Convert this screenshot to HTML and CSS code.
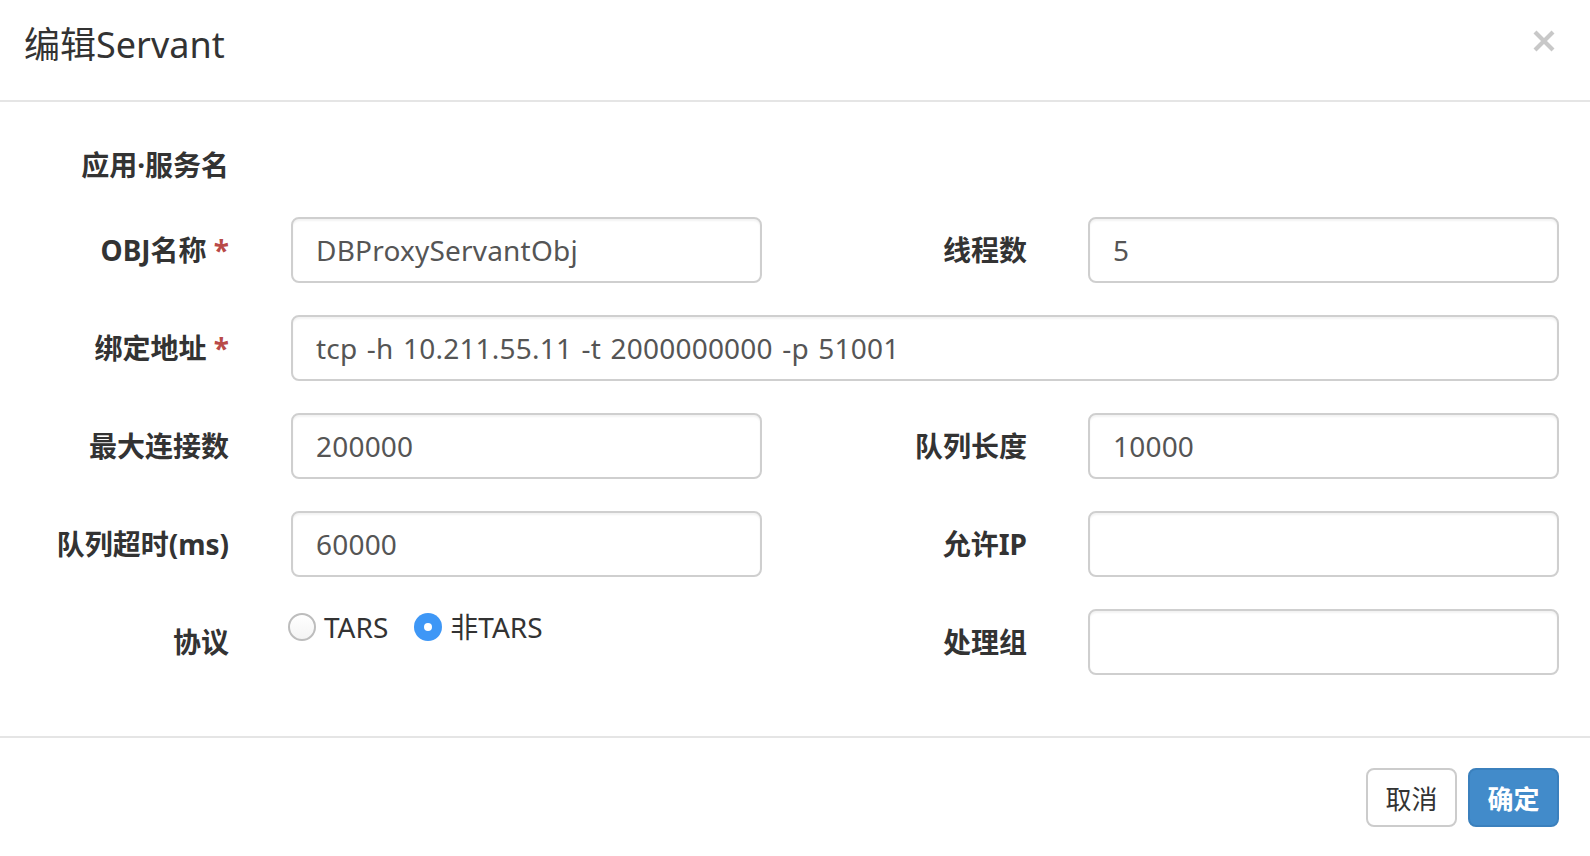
FILE: index.html
```html
<!DOCTYPE html>
<html lang="zh-CN">
<head>
<meta charset="utf-8">
<title>编辑Servant</title>
<link rel="stylesheet" href="styles.css">
</head>
<body>
<div class="modal">
  <div class="modal-header">
    <h4 class="modal-title">编辑Servant</h4>
    <button class="close" type="button" aria-label="关闭">
      <svg width="22" height="22" viewBox="0 0 22 22"><path d="M2 2 L20 20 M20 2 L2 20" stroke="#c8c8c8" stroke-width="4.2" stroke-linecap="butt"/></svg>
    </button>
  </div>
  <div class="modal-body">
    <form class="form-grid">
      <label class="ctl-label static-label">应用·服务名</label>
      <div class="static-value"></div>

      <label class="ctl-label">OBJ名称 <span class="req">*</span></label>
      <input class="form-control" type="text" value="DBProxyServantObj">
      <label class="ctl-label right">线程数</label>
      <input class="form-control" type="text" value="5">

      <label class="ctl-label">绑定地址 <span class="req">*</span></label>
      <input class="form-control wide" type="text" value="tcp -h 10.211.55.11 -t 2000000000 -p 51001">

      <label class="ctl-label">最大连接数</label>
      <input class="form-control" type="text" value="200000">
      <label class="ctl-label right">队列长度</label>
      <input class="form-control" type="text" value="10000">

      <label class="ctl-label">队列超时(ms)</label>
      <input class="form-control" type="text" value="60000">
      <label class="ctl-label right">允许IP</label>
      <input class="form-control" type="text" value="">

      <label class="ctl-label">协议</label>
      <div class="radio-group">
        <span class="radio-item"><span class="radio"></span>TARS</span>
        <span class="radio-item"><span class="radio checked"></span>非TARS</span>
      </div>
      <label class="ctl-label right">处理组</label>
      <input class="form-control" type="text" value="">
    </form>
  </div>
  <div class="modal-footer">
    <button class="btn btn-default" type="button">取消</button>
    <button class="btn btn-primary" type="button">确定</button>
  </div>
</div>
</body>
</html>
```

FILE: styles.css
```css
* { box-sizing: border-box; }
html, body {
  margin: 0;
  padding: 0;
  background: #fff;
}
body {
  width: 1590px;
  height: 856px;
  overflow: hidden;
  font-family: "Noto Sans", "Noto Sans CJK SC", sans-serif;
  color: #333;
}
.modal {
  width: 1590px;
}
.modal-header {
  height: 102px;
  padding: 27px 35px 0 24px;
  border-bottom: 2px solid #e5e5e5;
  display: flex;
  justify-content: space-between;
  align-items: flex-start;
}
.modal-title {
  margin: 0;
  font-size: 36px;
  line-height: 36px;
  font-weight: 400;
  color: #333;
}
.close {
  margin-top: 3px;
  padding: 0;
  border: 0;
  background: transparent;
  width: 22px;
  height: 22px;
  display: block;
  cursor: pointer;
}
.close svg { display: block; }

.modal-body {
  padding: 30px 0 61px 0;
}
.form-grid {
  margin: 0;
  display: grid;
  grid-template-columns: 291px 471px 326px 471px;
  grid-auto-rows: 66px;
  row-gap: 32px;
  grid-template-rows: 53px;
}
.ctl-label {
  font-size: 28px;
  font-weight: 700;
  line-height: 66px;
  text-align: right;
  padding-right: 62px;
  color: #333;
  white-space: nowrap;
}
.ctl-label.right {
  padding-right: 61px;
}
.static-label {
  line-height: 40px;
  padding-top: 13px;
}
.static-value {
  grid-column: 2 / 5;
}
.req {
  color: #b94a48;
}
.form-control {
  display: block;
  width: 100%;
  height: 66px;
  padding: 0 22px 0 23px;
  font-family: "Noto Sans", "Noto Sans CJK SC", sans-serif;
  font-size: 28px;
  word-spacing: 2px;
  letter-spacing: 0.2px;
  color: #555;
  background: #fff;
  border: 2px solid #cfcfcf;
  border-radius: 8px;
  box-shadow: inset 0 2px 2px rgba(0,0,0,0.05);
  outline: none;
}
.form-control.wide {
  grid-column: 2 / 5;
}
.radio-group {
  display: flex;
  align-items: center;
  height: 40px;
  margin-top: -2px;
  margin-left: -3px;
  font-size: 28px;
  line-height: 40px;
  color: #333;
}
.radio-item {
  display: inline-flex;
  align-items: center;
  gap: 8px;
  margin-right: 26px;
}
.radio {
  width: 28px;
  height: 28px;
  border-radius: 50%;
  border: 2px solid #bdbdbd;
  background: linear-gradient(#ffffff, #f4f4f4);
  display: inline-block;
  position: relative;
}
.radio.checked {
  border: 0;
  background: #3e97f6;
}
.radio.checked::after {
  content: "";
  position: absolute;
  left: 10px;
  top: 10px;
  width: 8px;
  height: 8px;
  border-radius: 50%;
  background: #fff;
}

.modal-footer {
  border-top: 2px solid #e5e5e5;
  padding: 30px 31px 0 0;
  display: flex;
  justify-content: flex-end;
  gap: 11px;
}
.btn {
  height: 59px;
  width: 91px;
  padding: 0;
  font-family: "Noto Sans CJK SC", "Noto Sans", sans-serif;
  font-size: 26px;
  border-radius: 8px;
  cursor: pointer;
}
.btn-default {
  background: #fff;
  color: #333;
  border: 2px solid #cccccc;
}
.btn-primary {
  background: #428bca;
  color: #fff;
  border: 2px solid #3b80bd;
  font-weight: 700;
}
```
